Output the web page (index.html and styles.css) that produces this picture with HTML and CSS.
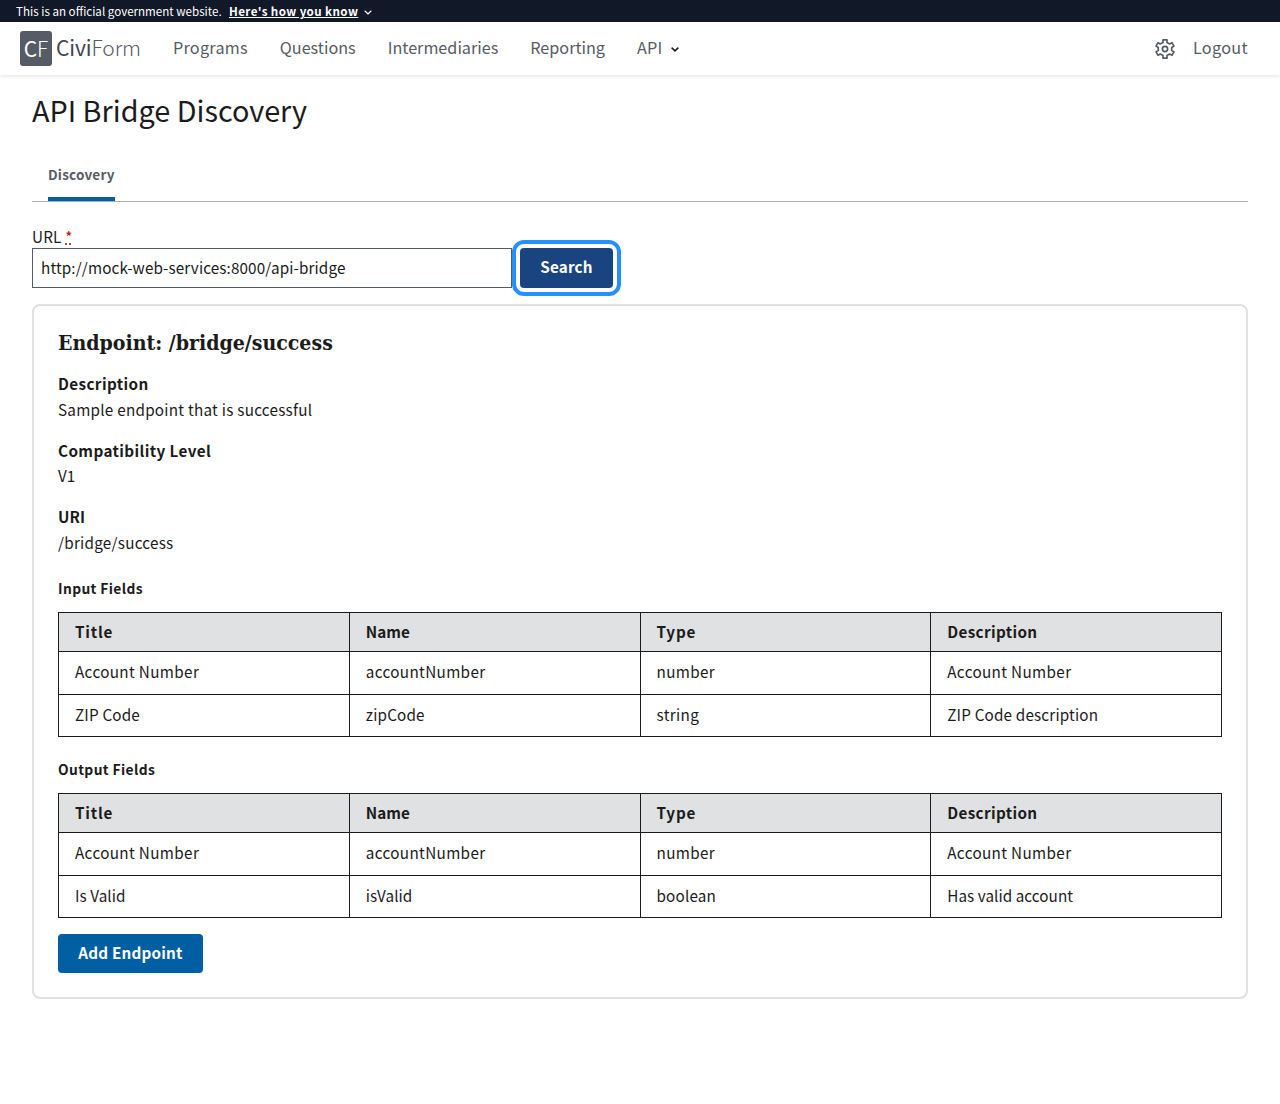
FILE: index.html
```html
<!DOCTYPE html>
<html lang="en">
<head>
<meta charset="utf-8">
<title>API Bridge Discovery</title>
<link rel="stylesheet" href="styles.css">
</head>
<body>
<div class="banner">
  <span class="banner-text">This is an official government website.</span>
  <a class="banner-link">Here's how you know</a>
  <svg class="banner-chevron" width="8" height="5" viewBox="0 0 8 5"><path d="M.7.7 4 3.9 7.3.7" fill="none" stroke="currentColor" stroke-width="1.3"/></svg>
</div>
<header class="header">
  <div class="logo"><span class="logo-mark"><b>C</b>F</span><span class="logo-name"><b>Civi</b>Form</span></div>
  <nav class="nav">
    <a class="programs">Programs</a>
    <a class="questions">Questions</a>
    <a class="intermediaries">Intermediaries</a>
    <a class="reporting">Reporting</a>
    <a class="api">API<svg width="8" height="5" viewBox="0 0 8 5"><path d="M.6.6 4 3.9 7.4.6" fill="none" stroke="#1b1b1b" stroke-width="1.5"/></svg></a>
  </nav>
  <div class="account">
    <svg class="gear" width="24" height="24" viewBox="-12 -12 24 24" fill="none" stroke="currentColor" stroke-width="1.7" stroke-linejoin="round"><path d="M-2-9.2H2V-6.6L4.72-5.03 6.97-6.33 8.97-2.87 6.72-1.57V1.57L8.97 2.87 6.97 6.33 4.72 5.03 2 6.6V9.2H-2V6.6L-4.72 5.03-6.97 6.33-8.97 2.87-6.72 1.57V-1.57L-8.97-2.87-6.97-6.33-4.72-5.03-2-6.6Z"/><circle r="2.6"/></svg>
    <a class="logout">Logout</a>
  </div>
</header>
<main class="main">
  <h1 class="title">API Bridge Discovery</h1>
  <div class="tabs"><a class="tab">Discovery</a></div>
  <label class="label" for="url">URL <abbr class="required" title="required">*</abbr></label>
  <div class="search">
    <input class="url" id="url" type="text" value="http://mock-web-services:8000/api-bridge">
    <button class="button button-focused">Search</button>
  </div>
  <section class="card">
    <h2 class="endpoint">Endpoint: /bridge/success</h2>
    <dl class="facts">
      <div><dt>Description</dt><dd>Sample endpoint that is successful</dd></div>
      <div><dt>Compatibility Level</dt><dd class="snug">V1</dd></div>
      <div><dt class="snug">URI</dt><dd>/bridge/success</dd></div>
    </dl>
    <h3 class="fields-title">Input Fields</h3>
    <table class="fields">
      <tr><th class="wide">Title</th><th class="snug">Name</th><th class="wide">Type</th><th>Description</th></tr>
      <tr><td>Account Number</td><td>accountNumber</td><td>number</td><td>Account Number</td></tr>
      <tr><td class="medium">ZIP Code</td><td class="medium">zipCode</td><td>string</td><td class="medium">ZIP Code description</td></tr>
    </table>
    <h3 class="fields-title">Output Fields</h3>
    <table class="fields">
      <tr><th class="wide">Title</th><th class="snug">Name</th><th class="wide">Type</th><th>Description</th></tr>
      <tr><td>Account Number</td><td>accountNumber</td><td>number</td><td>Account Number</td></tr>
      <tr><td class="snug">Is Valid</td><td class="snug">isValid</td><td class="medium">boolean</td><td class="snug">Has valid account</td></tr>
    </table>
    <button class="button button-add">Add Endpoint</button>
  </section>
</main>
</body>
</html>
```
FILE: styles.css
```css
* { box-sizing: border-box; }
body {
  margin: 0;
  background: #fff;
  color: #1b1b1b;
  font-family: "Noto Sans CJK SC", "Open Sans", sans-serif;
  font-size: 15.25px;
  line-height: 25px;
  white-space: nowrap;
}
.banner {
  display: flex;
  align-items: center;
  height: 22px;
  padding-left: 16px;
  background: #111827;
  color: #fff;
  font-size: 11.6px;
  line-height: 22px;
}
.banner-text { width: 205px; }
.banner-link { margin-left: 8px; font-weight: 700; letter-spacing: .4px; text-decoration: underline; }
.banner-chevron { margin: 2px 0 0 6px; }
.header {
  display: flex;
  align-items: center;
  height: 53px;
  padding: 0 32px 0 20px;
  box-shadow: 0 1px 4px rgba(0, 0, 0, .12);
  color: #565c65;
  font-size: 16.2px;
}
.logo { display: flex; align-items: center; width: 153px; }
.logo b { font-weight: 400; }
.logo-mark {
  width: 32px;
  height: 35px;
  border-radius: 3px;
  background: #565c65;
  color: #fff;
  font-size: 21px;
  font-weight: 300;
  line-height: 35px;
  text-align: center;
}
.logo-name { margin-left: 4px; padding-bottom: 3px; font-size: 21px; font-weight: 300; letter-spacing: -.1px; }
.logo-name b { color: #3d4551; }
.nav { display: flex; gap: 32px; padding-bottom: 2px; }
.programs { letter-spacing: .25px; }
.api { display: flex; align-items: center; letter-spacing: .2px; }
.api svg { margin: 4px 0 0 9px; }
.account { display: flex; align-items: center; gap: 16px; margin-left: auto; }
.logout { padding-bottom: 2px; letter-spacing: .35px; }
.main { padding: 0 32px; }
.title { margin: 15px 0 0; font-size: 28.8px; font-weight: 400; line-height: 40px; }
.tabs {
  display: flex;
  height: 53px;
  margin-top: 19px;
  padding-left: 16px;
  border-bottom: 1px solid #a9aeb1;
  margin-bottom: 22px;
}
.tab {
  height: 52px;
  border-bottom: 4px solid #005ea2;
  color: #565c65;
  font-size: 13.5px;
  font-weight: 700;
  letter-spacing: .2px;
  line-height: 50px;
}
.label { display: block; height: 24px; line-height: 24px; letter-spacing: .2px; }
.required { color: #b50909; text-decoration: underline dotted; }
.search { display: flex; gap: 8px; }
.url {
  width: 480px;
  height: 40px;
  padding: 0 8px 2px;
  border: 1px solid #565c65;
  color: #1b1b1b;
  font: inherit;
  letter-spacing: .12px;
}
.button {
  display: block;
  border: 0;
  border-radius: 4px;
  padding: 0 0 3px;
  background: #005ea2;
  color: #fff;
  font: inherit;
  font-weight: 700;
  letter-spacing: .2px;
}
.button-focused {
  width: 93px;
  height: 40px;
  background: #1a4480;
  outline: 4px solid #2491ff;
  outline-offset: 4px;
}
.button-add { width: 145px; height: 39px; margin-top: 16px; padding-bottom: 2px; }
.card {
  height: 695px;
  margin-top: 16px;
  padding: 22px 24px;
  border: 2px solid #dfe1e2;
  border-radius: 8px;
}
.endpoint {
  margin: 0;
  font-family: "DejaVu Serif Condensed", "DejaVu Serif", serif;
  font-size: 21.1px;
  font-weight: 700;
  line-height: 30px;
}
.facts { margin: 13px 0 0; }
.facts div { height: 66.5px; }
.facts dt { font-weight: 700; letter-spacing: .38px; line-height: 25.5px; }
.facts dd { margin: 0; letter-spacing: .25px; line-height: 25px; }
.facts div:first-child dd { line-height: 24px; }
.fields-title { margin: 5px 0 11px; font-size: 13.8px; font-weight: 700; letter-spacing: .38px; line-height: 25px; }
.fields { width: 1164px; table-layout: fixed; border-collapse: collapse; }
.fields + .fields-title { margin-top: 20px; }
.fields th, .fields td {
  height: 43px;
  padding: 0 16px 2px;
  border: 1px solid #1b1b1b;
  letter-spacing: .35px;
  text-align: left;
}
.fields th { height: 39px; padding-bottom: 0; background: #dfe1e2; }
.fields tr:last-child td { height: 42px; }
.fields .wide { letter-spacing: .8px; }
.fields .medium { letter-spacing: .17px; }
.facts .snug, .fields .snug { letter-spacing: .06px; }
```
